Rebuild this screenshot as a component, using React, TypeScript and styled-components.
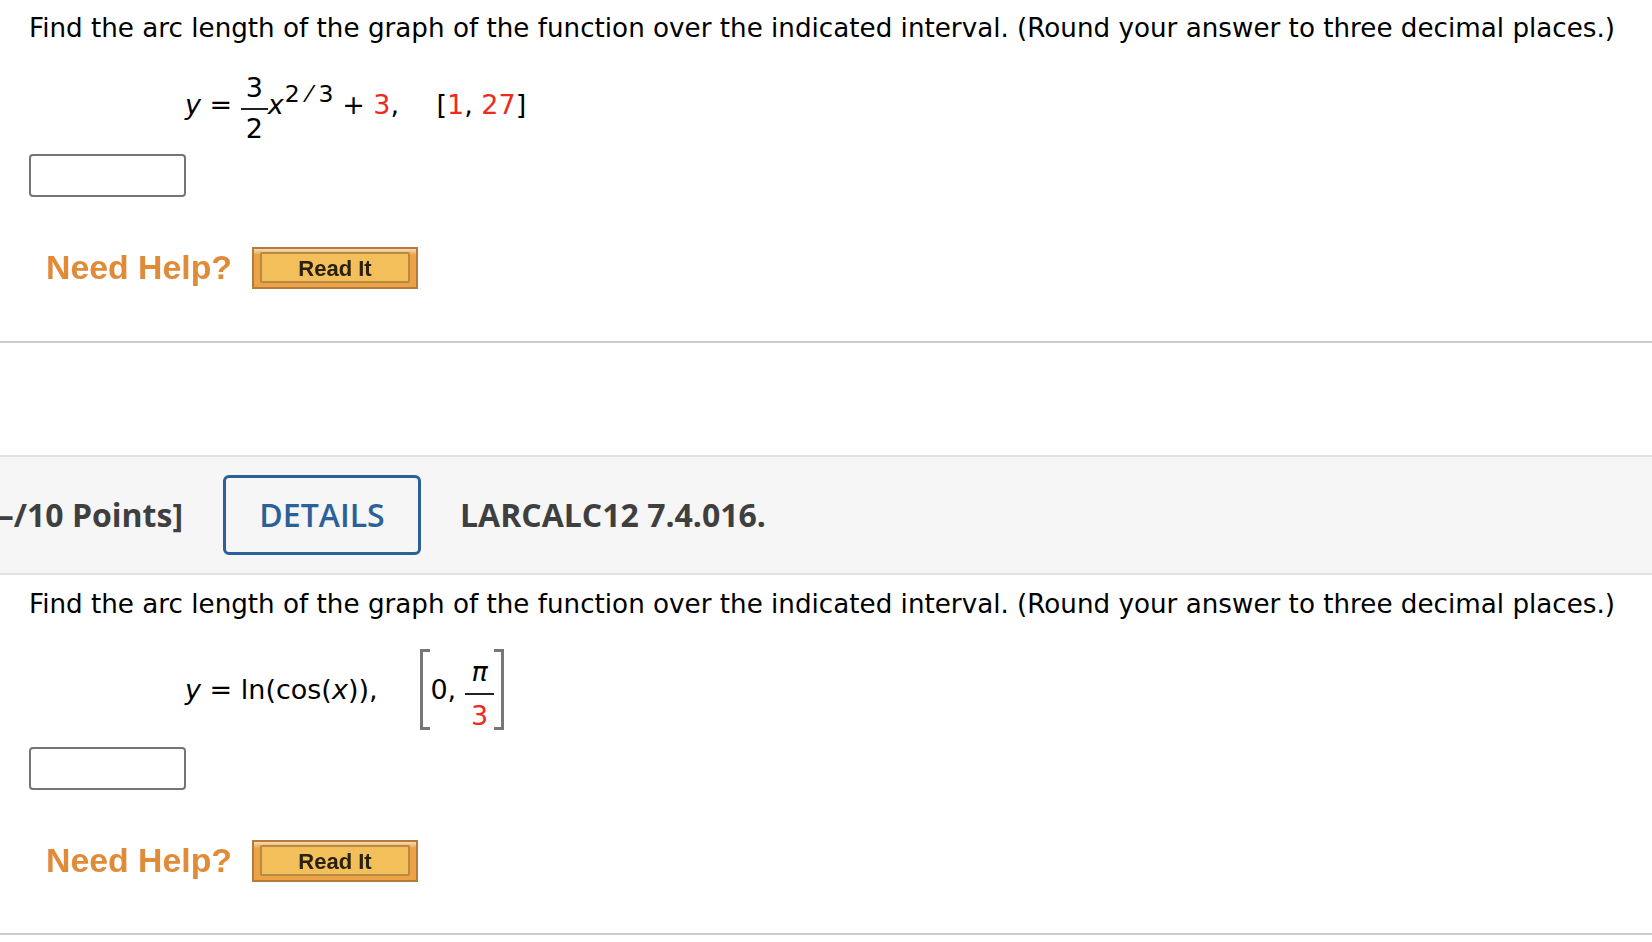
import React from "react";
import styled, { createGlobalStyle } from "styled-components";

const PROMPT =
  "Find the arc length of the graph of the function over the indicated interval. (Round your answer to three decimal places.)";

const GlobalStyle = createGlobalStyle`
  html, body {
    margin: 0;
    padding: 0;
    background: #fff;
    overflow: hidden;
  }
  body {
    font-family: "DejaVu Sans", Verdana, sans-serif;
    color: #000;
  }
`;

const Page = styled.div`
  width: 1652px;
  height: 942px;
  overflow: hidden;
`;

const Question = styled.section`
  padding: 0 0 0 29px;
`;

const Prompt = styled.p<{ $top: number }>`
  margin: 0;
  padding-top: ${(p) => p.$top}px;
  font-size: 26.2px;
  line-height: 30px;
  white-space: nowrap;
`;

const MathRow = styled.div<{ $top: number; $height: number }>`
  display: flex;
  align-items: center;
  height: ${(p) => p.$height}px;
  margin: ${(p) => p.$top}px 0 0 156px;
  font-size: 27px;
  white-space: nowrap;
`;

const Var = styled.i`
  font-style: italic;
`;

const Red = styled.span`
  color: #ee2a1e;
`;

const Interval = styled.span`
  margin-left: 3px;
`;

const Fraction = styled.span<{ $bar: number; $gap?: number; $line?: number }>`
  display: inline-flex;
  flex-direction: column;
  align-items: center;
  width: ${(p) => p.$bar}px;
  margin: 8px 0 0 ${(p) => p.$gap ?? 0}px;
  line-height: ${(p) => p.$line ?? 36}px;
`;

const Numerator = styled.span`
  display: block;
  width: 100%;
  text-align: center;
  border-bottom: 2px solid #222;
  padding: 0 0 2px;
`;

const Denominator = styled.span`
  display: block;
  padding-top: 1px;
`;

const Sup = styled.span`
  font-size: 23.5px;
  position: relative;
  top: -10px;
  margin-left: 1px;
`;

const BigBracket = styled.span<{ $side: "left" | "right" }>`
  display: inline-block;
  flex: none;
  width: 7px;
  height: 75px;
  border: 3px solid #777;
  border-${(p) => (p.$side === "left" ? "right" : "left")}: none;
`;

const AnswerInput = styled.input<{ $top: number }>`
  display: block;
  box-sizing: border-box;
  width: 157px;
  height: 43px;
  margin-top: ${(p) => p.$top}px;
  padding: 0;
  background: #fff;
  border: 2px solid #757575;
  border-radius: 4px;
`;

const HelpRow = styled.div<{ $top: number }>`
  display: flex;
  align-items: center;
  height: 43px;
  margin: ${(p) => p.$top}px 0 0 17px;
`;

const HelpLabel = styled.span`
  width: 206px;
  font-family: "Liberation Sans", Arial, sans-serif;
  font-size: 33.8px;
  font-weight: bold;
  color: #e08b38;
  filter: blur(0.5px);
  white-space: nowrap;
`;

const ReadIt = styled.button`
  box-sizing: border-box;
  display: flex;
  align-items: center;
  justify-content: center;
  width: 166px;
  height: 42px;
  padding: 0;
  background: linear-gradient(#f6dcb8 0, #eda246 6px, #eda246 100%);
  border: 2px solid #b47c3c;
  cursor: pointer;
`;

const ReadItInner = styled.span`
  box-sizing: border-box;
  display: block;
  width: 150px;
  height: 31px;
  background: #f2bf5a;
  border: 2px solid #b58a44;
  border-radius: 2px;
  font-family: "Liberation Sans", Arial, sans-serif;
  font-size: 22px;
  font-weight: bold;
  line-height: 29px;
  text-align: center;
  color: #2a2110;
  filter: blur(0.4px);
`;

const Divider = styled.hr<{ $top: number }>`
  margin: ${(p) => p.$top}px 0 0;
  border: none;
  border-top: 2px solid #cdcdcd;
`;

const HeaderBand = styled.header`
  box-sizing: border-box;
  display: flex;
  align-items: center;
  height: 120px;
  margin-top: 112px;
  background: #f6f6f6;
  border-top: 2px solid #e2e2e2;
  border-bottom: 2px solid #e2e2e2;
  font-family: "Open Sans", sans-serif;
  font-size: 32px;
  font-weight: 700;
  color: #3f3f3f;
  white-space: nowrap;
`;

const Points = styled.div`
  display: flex;
  justify-content: flex-end;
  width: 183px;
  margin-bottom: 2px;
  overflow: hidden;
`;

const DetailsButton = styled.button`
  box-sizing: border-box;
  width: 198px;
  height: 80px;
  margin: 0 39px 0 40px;
  padding: 0 0 2px;
  background: transparent;
  border: 3px solid #2b6198;
  border-radius: 6px;
  font: inherit;
  font-weight: 600;
  color: #2b6198;
  cursor: pointer;
`;

const AssignmentRef = styled.span`
  margin-bottom: 2px;
`;

export default function App() {
  return (
    <Page>
      <GlobalStyle />
      <Question>
        <Prompt $top={13}>{PROMPT}</Prompt>
        <MathRow $top={17} $height={88}>
          <Var>y</Var>&nbsp;=&nbsp;
          <Fraction $bar={27}>
            <Numerator>3</Numerator>
            <Denominator>2</Denominator>
          </Fraction>
          <Var>x</Var>
          <Sup>2 ⁄ 3</Sup>&nbsp;+&nbsp;<Red>3</Red>,&nbsp;&nbsp;&nbsp;&nbsp;
          <Interval>
            [<Red>1</Red>,&nbsp;<Red>27</Red>]
          </Interval>
        </MathRow>
        <AnswerInput $top={6} aria-label="Answer" />
        <HelpRow $top={49}>
          <HelpLabel>Need Help?</HelpLabel>
          <ReadIt>
            <ReadItInner>Read It</ReadItInner>
          </ReadIt>
        </HelpRow>
      </Question>
      <Divider $top={52} />
      <HeaderBand>
        <Points>–/10 Points]</Points>
        <DetailsButton>DETAILS</DetailsButton>
        <AssignmentRef>LARCALC12 7.4.016.</AssignmentRef>
      </HeaderBand>
      <Question>
        <Prompt $top={14}>{PROMPT}</Prompt>
        <MathRow $top={19} $height={102}>
          <Var>y</Var>&nbsp;=&nbsp;ln(cos(<Var>x</Var>)),&nbsp;&nbsp;&nbsp;&nbsp;&nbsp;
          <BigBracket $side="left" />
          0,
          <Fraction $bar={29} $gap={9} $line={39}>
            <Numerator>
              <Var>π</Var>
            </Numerator>
            <Denominator>
              <Red>3</Red>
            </Denominator>
          </Fraction>
          <BigBracket $side="right" />
        </MathRow>
        <AnswerInput $top={7} aria-label="Answer" />
        <HelpRow $top={49}>
          <HelpLabel>Need Help?</HelpLabel>
          <ReadIt>
            <ReadItInner>Read It</ReadItInner>
          </ReadIt>
        </HelpRow>
      </Question>
      <Divider $top={51} />
    </Page>
  );
}
